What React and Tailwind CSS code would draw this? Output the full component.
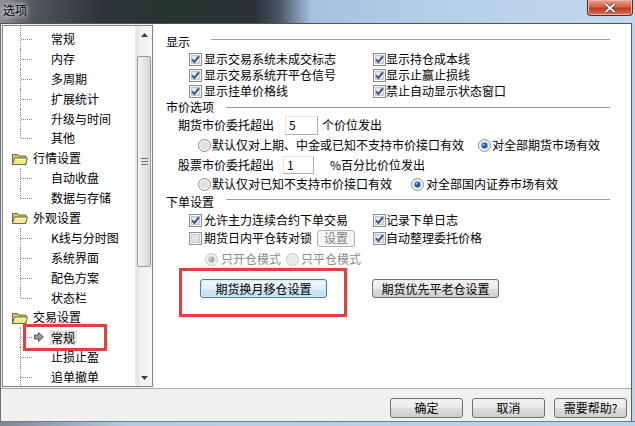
import React from "react";

const Check = ({ checked = true }) => (
  <svg width="13" height="13" viewBox="0 0 13 13" className="shrink-0">
    <rect x="0.5" y="0.5" width="12" height="12" fill="#f5f5f5" stroke="#8e8f8f" />
    <rect x="2" y="2" width="9" height="9" fill="#dfe3e9" />
    <rect x="2.5" y="2.5" width="8" height="8" fill="none" stroke="#c3c9d1" strokeWidth="1" />
    {checked && (
      <path d="M3 6.3 L5.4 9 L10 3.2" fill="none" stroke="#3d5191" strokeWidth="1.9" />
    )}
  </svg>
);

const Radio = ({ selected = false, disabled = false }) => (
  <svg width="13" height="13" viewBox="0 0 13 13" className="shrink-0">
    <circle cx="6.5" cy="6.5" r="6" fill={disabled ? "#f1f1f1" : "#f4f4f4"} stroke={disabled ? "#c4c4c4" : "#8e8f8f"} />
    <circle cx="6.5" cy="6.5" r="4.2" fill={disabled ? "#e8e8e8" : "#dde1e7"} />
    {selected && (
      <>
        <circle cx="6.5" cy="6.5" r="3" fill={disabled ? "#a9a9a9" : "#1f5cad"} />
        <circle cx="5.6" cy="5.6" r="1.1" fill={disabled ? "#e0e0e0" : "#9fd0f5"} />
      </>
    )}
  </svg>
);

const Folder = () => (
  <svg width="16" height="13" viewBox="0 0 16 13" className="shrink-0">
    <path d="M0.5 2.5 h5 l1 1.5 h7.5 v8.5 h-13.5 z" fill="#d8c35a" stroke="#6f6a4a" />
    <path d="M2.5 6 h13 l-2 6.5 h-13 z" fill="#f3ea8c" stroke="#6f6a4a" />
    <path d="M3 7.5 h11" stroke="#fffbd0" />
  </svg>
);

const Arrow = () => (
  <svg width="10" height="10" viewBox="0 0 10 10" className="shrink-0">
    <path d="M0.5 3 h4 v-2.5 l5 4.5 l-5 4.5 v-2.5 h-4 z" fill="#9a9a9a" stroke="#444" strokeWidth="0.8" />
  </svg>
);

const treeRows = [
  { t: "常规", k: "child" },
  { t: "内存", k: "child" },
  { t: "多周期", k: "child" },
  { t: "扩展统计", k: "child" },
  { t: "升级与时间", k: "child" },
  { t: "其他", k: "last" },
  { t: "行情设置", k: "folder" },
  { t: "自动收盘", k: "child" },
  { t: "数据与存储", k: "last" },
  { t: "外观设置", k: "folder" },
  { t: "K线与分时图", k: "child" },
  { t: "系统界面", k: "child" },
  { t: "配色方案", k: "child" },
  { t: "状态栏", k: "last" },
  { t: "交易设置", k: "folder" },
  { t: "常规", k: "selected" },
  { t: "止损止盈", k: "child" },
  { t: "追单撤单", k: "child" },
];

const TreeRow = ({ t, k, first }) => {
  if (k === "folder") {
    return (
      <div className="h-[19.9px] flex items-center">
        <div className="ml-[9px]">
          <Folder />
        </div>
        <span className="ml-[5px]">{t}</span>
      </div>
    );
  }
  return (
    <div className="relative h-[19.9px] flex items-center">
      <span
        className={
          "absolute left-[17px] border-l border-dotted border-[#8a8a8a] " +
          (k === "last" ? "top-0 h-[10px]" : first ? "-top-[3px] h-[23px]" : "top-0 h-[20px]")
        }
      />
      <span className="absolute left-[18px] top-[10px] w-[11px] border-t border-dotted border-[#8a8a8a]" />
      {k === "selected" ? (
        <>
          <span className="ml-[31px]">
            <Arrow />
          </span>
          <span className="ml-[5px] px-[2px] bg-[#e4e4e4] leading-[15px]">{t}</span>
        </>
      ) : (
        <span className="ml-[48px]">{t}</span>
      )}
    </div>
  );
};

const Btn = ({ children, className = "", variant = "normal" }) => {
  const styles = {
    normal:
      "border-[#707070] bg-[linear-gradient(#f2f2f2_0%,#ebebeb_50%,#dddddd_51%,#cfcfcf_100%)] text-black",
    default:
      "border-[#3c7fb1] bg-[linear-gradient(#f1f6fa_0%,#e4eef6_50%,#d3e4f1_51%,#c6dcec_100%)] text-black shadow-[inset_0_0_0_1px_#d8ecf8]",
    disabled: "border-[#adb2b5] bg-[#f4f4f4] text-[#838383]",
  };
  return (
    <div
      className={
        "flex items-center justify-center border rounded-[3px] leading-none " +
        styles[variant] +
        " " +
        className
      }
    >
      {children}
    </div>
  );
};

const Header = ({ label, w }) => (
  <div className="flex items-start h-[17px] leading-[16px] pl-[12px] pr-[21px]">
    <span className={w}>{label}</span>
    <div className="flex-1 mt-[5px] h-px bg-[#a0a0a0]" />
  </div>
);

const CbRow = ({ h = "h-[16px]", a, b, aChecked = true, bChecked = true, extra }) => (
  <div className={"flex items-center " + h}>
    <div className="flex items-center pl-[35px] w-[219px]">
      <Check checked={aChecked} />
      <span className="ml-[2px]">{a}</span>
      {extra}
    </div>
    <div className="flex items-center">
      <Check checked={bChecked} />
      <span className="ml-[0px]">{b}</span>
    </div>
  </div>
);

export default function App() {
  return (
    <div className="relative w-[635px] h-[426px] overflow-hidden flex flex-col text-[12px] text-black font-['Noto_Sans_CJK_SC','Noto_Sans',sans-serif] bg-[#b9d0ea]">
      {/* Title bar */}
      <div className="h-[23px] flex items-start justify-between bg-[linear-gradient(90deg,#8d9095_0%,#54585e_5%,#2e3339_16%,#263530_28%,#2b3036_40%,#4a5565_44%,#a6c2df_49%,#b6cfe9_70%,#c3d8ee_100%)]">
        <span className="ml-[3px] mt-[2px] leading-[16px] [text-shadow:0_0_4px_#ffffff,0_0_7px_#ffffffaa]">选项</span>
        <div className="mr-[2px] w-[46px] h-[16px] rounded-b-[4px] border border-t-0 border-[#6b2016] bg-[linear-gradient(#e8a18f_0%,#d4624b_45%,#c2391f_55%,#d9745c_100%)] flex items-center justify-center shadow-[inset_0_0_0_1px_#f0b4a4]">
          <svg width="12" height="10" viewBox="0 0 12 10">
            <path d="M1.5 1 L10.5 9 M10.5 1 L1.5 9" stroke="#3a2a2a" strokeWidth="3.4" />
            <path d="M1.5 1 L10.5 9 M10.5 1 L1.5 9" stroke="#ffffff" strokeWidth="2" />
          </svg>
        </div>
      </div>

      {/* Body */}
      <div className="flex-1 flex">
        <div className="flex-1 flex flex-col bg-[#f0f0f0] border-t border-l border-r border-t-[#4d545c] border-l-[#6b6f74] border-r-[#4f5e70]">
          {/* main */}
          <div className="h-[364px] flex">
            {/* Tree */}
            <div className="ml-[1px] mt-[1px] w-[151px] h-[362px] border border-[#828790] bg-white flex overflow-hidden">
              <div className="flex-1 pt-[3px] overflow-hidden leading-[16px]">
                {treeRows.map((r, i) => (
                  <TreeRow key={i} {...r} first={i === 0} />
                ))}
              </div>
              {/* Scrollbar */}
              <div className="w-[17px] flex flex-col bg-[linear-gradient(90deg,#e3e3e3,#f0f0f0_30%,#f6f6f6)] border-l border-[#ececec]">
                <div className="h-[17px] flex items-center justify-center">
                  <svg width="7" height="4" viewBox="0 0 7 4">
                    <path d="M0 4 L3.5 0 L7 4 z" fill="#404040" />
                  </svg>
                </div>
                <div className="mt-[13px] mx-[1px] h-[211px] rounded-[2px] border border-[#979797] bg-[linear-gradient(90deg,#f3f3f3,#e6e6e6_50%,#d8d8d8)] flex flex-col items-center justify-center gap-[2px]">
                  <div className="w-[7px] h-px bg-[#6f6f6f]" />
                  <div className="w-[7px] h-px bg-[#6f6f6f]" />
                  <div className="w-[7px] h-px bg-[#6f6f6f]" />
                </div>
                <div className="flex-1" />
                <div className="h-[17px] flex items-center justify-center">
                  <svg width="7" height="4" viewBox="0 0 7 4">
                    <path d="M0 0 L3.5 4 L7 0 z" fill="#404040" />
                  </svg>
                </div>
              </div>
            </div>

            {/* Right panel */}
            <div className="flex-1 ml-[1px] bg-white pt-[10px] leading-[16px]">
              <Header label="显示" w="w-[45px]" />
              <CbRow a="显示交易系统未成交标志" b="显示持仓成本线" />
              <CbRow a="显示交易系统开平仓信号" b="显示止赢止损线" />
              <CbRow a="显示挂单价格线" b="禁止自动显示状态窗口" />
              <div className="h-[16px] flex items-start pl-[12px] pr-[21px]">
                <span className="w-[60px]">市价选项</span>
                <div className="flex-1 mt-[8px] h-px bg-[#a0a0a0]" />
              </div>
              <div className="h-[20px] flex items-center pl-[24px]">
                <span>期货市价委托超出</span>
                <div className="ml-[11px] w-[33px] h-[19px] border border-[#abadb3] border-t-[#e3e3e3] border-l-[#e3e3e3] flex items-center pl-[3px]">5</div>
                <span className="ml-[4px]">个价位发出</span>
              </div>
              <div className="h-[20px] flex items-center pl-[44px]">
                <Radio />
                <span className="ml-[1px] w-[266px]">默认仅对上期、中金或已知不支持市价接口有效</span>
                <Radio selected />
                <span className="ml-[1px]">对全部期货市场有效</span>
              </div>
              <div className="h-[19px] flex items-center pl-[24px]">
                <span>股票市价委托超出</span>
                <div className="ml-[9px] w-[31px] h-[18px] border border-[#abadb3] border-t-[#e3e3e3] border-l-[#e3e3e3] flex items-center pl-[3px]">1</div>
                <span className="ml-[16px]">%百分比价位发出</span>
              </div>
              <div className="h-[20px] flex items-center pl-[44px]">
                <Radio />
                <span className="ml-[1px] w-[199px]">默认仅对已知不支持市价接口有效</span>
                <Radio selected />
                <span className="ml-[2px]">对全部国内证券市场有效</span>
              </div>
              <Header label="下单设置" w="w-[60px]" />
              <CbRow h="h-[18px]" a="允许主力连续合约下单交易" b="记录下单日志" />
              <CbRow
                h="h-[18px]"
                a="期货日内平仓转对锁"
                aChecked={false}
                b="自动整理委托价格"
                extra={
                  <Btn variant="disabled" className="ml-[5px] w-[38px] h-[17px]">
                    设置
                  </Btn>
                }
              />
              <div className="mt-[3px] h-[18px] flex items-center pl-[51px] text-[#8d8d8d]">
                <Radio selected disabled />
                <span className="ml-[3px] w-[65px]">只开仓模式</span>
                <Radio disabled />
                <span className="ml-[2px]">只平仓模式</span>
              </div>
              <div className="mt-[11px] flex items-center pl-[46px]">
                <Btn variant="default" className="w-[127px] h-[19px]">期货换月移仓设置</Btn>
                <Btn className="ml-[45px] w-[127px] h-[19px]">期货优先平老仓设置</Btn>
              </div>
            </div>
          </div>

          {/* bottom bar */}
          <div className="flex-1 border-t border-[#a8a8a8] flex items-start justify-end pr-[4px] pt-[9px] gap-[9px]">
            <Btn className="w-[73px] h-[20px]">确定</Btn>
            <Btn className="w-[73px] h-[20px]">取消</Btn>
            <Btn className="w-[73px] h-[20px]">需要帮助?</Btn>
          </div>
        </div>
        <div className="w-[3px] bg-[#bcd3ec]" />
      </div>
      <div className="h-[5px] bg-[linear-gradient(90deg,#7d8793,#b4cbe4_20%,#bcd3ec)] border-t border-[#6d7c8e]" />

      {/* Red highlight boxes */}
      <div className="absolute left-[23px] top-[324px] w-[84px] h-[27px] border-[3px] border-[#ee3a3a]" />
      <div className="absolute left-[179px] top-[268px] w-[168px] h-[49px] border-[3px] border-[#ee3a3a]" />
    </div>
  );
}
